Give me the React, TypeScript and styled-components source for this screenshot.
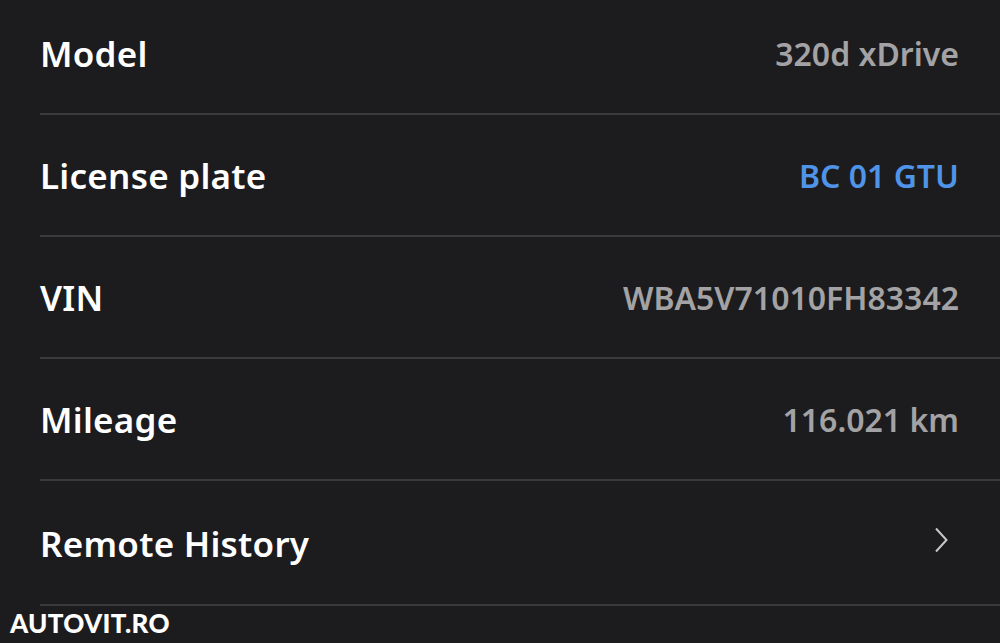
import React from "react";
import styled, { createGlobalStyle } from "styled-components";

const Global = createGlobalStyle`
  html, body { margin: 0; padding: 0; background: #1c1c1e; }
  body { font-family: "Noto Sans", "Open Sans", sans-serif; overflow: hidden; }
`;

const Page = styled.div`
  width: 1000px;
  height: 643px;
  background: #1c1c1e;
  position: relative;
  overflow: hidden;
`;

const List = styled.div`
  display: flex;
  flex-direction: column;
  margin-top: -7px;
  padding-left: 40px;
`;

const Row = styled.div<{ $tall?: boolean }>`
  height: ${(p) => (p.$tall ? 125 : 122)}px;
  box-sizing: border-box;
  display: flex;
  align-items: center;
  justify-content: space-between;
  padding-right: 41px;
  padding-top: 1px;
  border-bottom: 2px solid #3a3a3c;
`;

const Label = styled.span`
  color: #ffffff;
  font-size: 35px;
  font-weight: 600;
  letter-spacing: 0.25px;
`;

const Value = styled.span<{ $accent?: boolean }>`
  color: ${(p) => (p.$accent ? "#4f94e8" : "#a3a3a5")};
  font-size: 32px;
  font-weight: 600;
`;

const Chevron = styled.svg`
  width: 14px;
  height: 26px;
  margin-right: 11px;
  margin-bottom: 6px;
`;

const Watermark = styled.div`
  position: absolute;
  left: 10px;
  top: 607px;
  color: #ffffff;
  font-family: "Lato", sans-serif;
  font-weight: 900;
  font-size: 26px;
  letter-spacing: 0.3px;
`;

const rows: { label: string; value?: string; accent?: boolean }[] = [
  { label: "Model", value: "320d xDrive" },
  { label: "License plate", value: "BC 01 GTU", accent: true },
  { label: "VIN", value: "WBA5V71010FH83342" },
  { label: "Mileage", value: "116.021 km" },
  { label: "Remote History" },
];

export default function App() {
  return (
    <Page>
      <Global />
      <List>
        {rows.map((r, i) => (
          <Row key={r.label} $tall={i === rows.length - 1}>
            <Label>{r.label}</Label>
            {r.value ? (
              <Value $accent={r.accent}>{r.value}</Value>
            ) : (
              <Chevron viewBox="0 0 14 26" fill="none">
                <path d="M2 1.5 L12.5 13 L2 24.5" stroke="#c8c8ca" strokeWidth="2" />
              </Chevron>
            )}
          </Row>
        ))}
      </List>
      <Watermark>AUTOVIT.RO</Watermark>
    </Page>
  );
}
